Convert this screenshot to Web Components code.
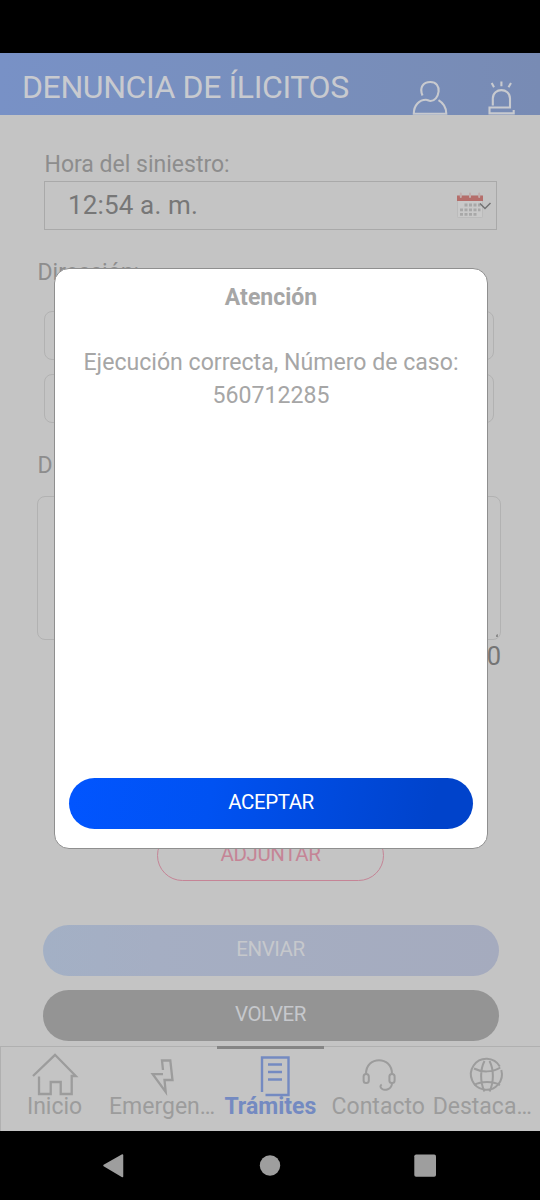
<!DOCTYPE html>
<html lang="es">
<head>
<meta charset="utf-8">
<meta name="viewport" content="width=device-width, initial-scale=1">
<title>Denuncia de ílicitos</title>
<style>
    body {
        margin: 0;
        background: #c4c4c4;
        font-family: Roboto, "Liberation Sans", sans-serif;
        color: #8d8d8d;
    }
</style>
</head>
<body>
<phone-screen>
    <app-header slot="header">DENUNCIA DE ÍLICITOS</app-header>

    <time-field label="Hora del siniestro:" value="12:54 a. m."></time-field>
    <address-fields label="Dirección:"></address-fields>
    <text-area-field label="Descripción:" count="0"></text-area-field>
    <pill-button kind="outline">ADJUNTAR</pill-button>
    <pill-button kind="send">ENVIAR</pill-button>
    <pill-button kind="back">VOLVER</pill-button>

    <tab-bar slot="tabs">
        <tab-item icon="home">Inicio</tab-item>
        <tab-item icon="bolt" long>Emergen…</tab-item>
        <tab-item icon="form" active>Trámites</tab-item>
        <tab-item icon="headset">Contacto</tab-item>
        <tab-item icon="globe" long>Destaca…</tab-item>
    </tab-bar>

    <alert-dialog slot="dialog" heading="Atención">
        Ejecución correcta, Número de caso: 560712285
        <pill-button slot="action" kind="accept">ACEPTAR</pill-button>
    </alert-dialog>
</phone-screen>

<script>
    class PhoneScreen extends HTMLElement {
        constructor() {
            super();
            this.attachShadow({ mode: 'open' }).innerHTML = `
                <style>
                    :host { display: flex; flex-direction: column; position: relative; width: 540px; height: 1200px; overflow: hidden; }
                    .status { height: 53px; background: #000; flex: none; }
                    main { flex: 1; display: flex; flex-direction: column; padding-top: 34px; min-height: 0; box-sizing: border-box; }
                    .nav { height: 69px; flex: none; background: #000; display: flex; }
                    .nav svg { display: block; }
                </style>
                <div class="status"></div>
                <slot name="header"></slot>
                <main><slot></slot></main>
                <slot name="tabs"></slot>
                <div class="nav">
                    <svg width="540" height="69" fill="#9e9e9e">
                        <path d="M104 34.5 L122.5 24 V45.500 Z" stroke="#9e9e9e" stroke-width="1.500" stroke-linejoin="round"/>
                        <circle cx="270" cy="34.500" r="10.200"/>
                        <rect x="414.300" y="23.500" width="21.700" height="22.300" rx="1.800"/>
                    </svg>
                </div>
                <slot name="dialog"></slot>
            `;
        }
    }

    class AppHeader extends HTMLElement {
        constructor() {
            super();
            this.attachShadow({ mode: 'open' }).innerHTML = `
                <style>
                    :host { display: flex; flex: none; height: 62px; box-sizing: border-box; padding: 0 24px 0 22px;
                        background: linear-gradient(90deg, #7891c6, #788fbd 50%, #788bb4); color: #c8cacf; }
                    .title { flex: 1; font-size: 32px; letter-spacing: -.4px; line-height: 68px; white-space: nowrap; }
                    svg { display: block; align-self: flex-end; fill: none; stroke: #c8cacf; stroke-width: 2.1; }
                    .siren { margin-left: 38px; }
                </style>
                <div class="title"><slot></slot></div>
                <svg width="36" height="38" viewBox="0 0 36 38">
                    <path d="M10.500 18.500 C7 10 11.500 5 18.300 5 C24.500 5 27 9.500 26.600 14.500 C26 20 22.500 24 18.500 24 C16.500 24 15.500 22.800 14 22.800 C7.500 22.800 1.800 28 1.800 36.700 H34.300 C34.300 31 32 26.500 26.500 23.200"/>
                </svg>
                <svg class="siren" width="30" height="38" viewBox="0 0 30 38">
                    <path d="M6.800 28.500 V21.500 C6.800 10.300 24 10.300 24 21.500 V30.500 H3.500 V36.400 H27.700 V33 M5.700 6 L8 10.200 M15.400 4.500 V9.300 M25 6 L22.500 10.200"/>
                </svg>
            `;
        }
    }

    class TimeField extends HTMLElement {
        constructor() {
            super();
            this.attachShadow({ mode: 'open' }).innerHTML = `
                <style>
                    :host { display: block; margin: 0 43px 0 44px; }
                    .label { font-size: 23px; line-height: 32px; height: 30px; padding-left: .5px; }
                    .box { display: flex; align-items: center; height: 49px; box-sizing: border-box; margin-top: 2px;
                        padding: 0 4px 0 23px; border: 1px solid #a9a9a9; font-size: 26px; color: #777; }
                    .value { flex: 1; letter-spacing: .15px; padding-bottom: 1px; }
                    svg { display: block; }
                </style>
                <div class="label">${this.getAttribute('label')}</div>
                <div class="box">
                    <span class="value">${this.getAttribute('value')}</span>
                    <svg width="36" height="28" viewBox="0 0 36 28">
                        <rect x="1.500" y="4" width="25" height="21.500" rx="1" fill="#c9c9c9" stroke="#b8b8b8" stroke-width=".8"/>
                        <path d="M1 3.500 H27 V9 H1 Z" fill="#b56e6b"/>
                        <path d="M4.800 1.500 V5 M14 1.500 V5 M23.200 1.500 V5" stroke="#c2aead" stroke-width="2" stroke-linecap="round"/>
                        <path d="M8.500 13 H24.500 M4 17.800 H24.500 M4 22.300 H21" stroke="#a8a8a8" stroke-width="2.8" stroke-dasharray="3 1.500"/>
                        <path d="M24 11.500 L29 16.500 L34.500 11" fill="none" stroke="#737373" stroke-width="1.500"/>
                    </svg>
                </div>
            `;
        }
    }

    class AddressFields extends HTMLElement {
        constructor() {
            super();
            this.attachShadow({ mode: 'open' }).innerHTML = `
                <style>
                    :host { display: block; margin: 28px 46px 0 37px; }
                    .label { font-size: 23px; line-height: 30px; padding-left: .5px; }
                    .inputs { display: grid; gap: 14px; margin: 23px 0 0 7px; }
                    .inputs div { height: 49px; box-sizing: border-box; border: 1px solid #b2b2b2; border-radius: 8px; }
                </style>
                <div class="label">${this.getAttribute('label')}</div>
                <div class="inputs"><div></div><div></div></div>
            `;
        }
    }

    class TextAreaField extends HTMLElement {
        constructor() {
            super();
            this.attachShadow({ mode: 'open' }).innerHTML = `
                <style>
                    :host { display: block; margin: 27px 39px 0 37px; }
                    .label { font-size: 23px; line-height: 32px; height: 30px; padding-left: .5px; letter-spacing: .8px; }
                    .area { display: flex; align-items: flex-end; justify-content: flex-end; height: 144px; box-sizing: border-box;
                        margin-top: 16px; border: 1px solid #b2b2b2; border-radius: 8px; }
                    svg { display: block; }
                    .count { text-align: right; font-size: 25.5px; line-height: 32px; color: #757575; height: 30px; }
                </style>
                <div class="label">${this.getAttribute('label')}</div>
                <div class="area">
                    <!-- resize grip -->
                    <svg width="14" height="64"><path d="M0 0 L2 2 L0 4 Z M10 60 L12 59 V62 H10 Z" fill="#8c8c8c"/></svg>
                </div>
                <div class="count">${this.getAttribute('count')}</div>
            `;
        }
    }

    class PillButton extends HTMLElement {
        constructor() {
            super();
            this.attachShadow({ mode: 'open' }).innerHTML = `
                <style>
                    :host { display: block; flex: none; height: 51px; box-sizing: border-box; border-radius: 26px;
                        font-size: 20.5px; letter-spacing: -.42px; line-height: 48px; text-align: center; color: #c6c8cc; }
                    :host([kind="outline"]) { width: 227px; margin: 160px 0 0 157px; border: 1px solid #c58496; color: #c58496; line-height: 46px; }
                    :host([kind="send"]) { margin: 44px 41.5px 0 42.5px; background: linear-gradient(90deg, #a3b0c5, #a5aec3 25%, #a5abbe); }
                    :host([kind="back"]) { margin: 14px 41.5px 0 42.5px; background: #949494; }
                    :host([kind="accept"]) { color: #fff; background: linear-gradient(100deg, #0155ff, #0052f2 35%, #0043cb 90%); }
                </style>
                <slot></slot>
            `;
        }
    }

    class TabBar extends HTMLElement {
        constructor() {
            super();
            this.attachShadow({ mode: 'open' }).innerHTML = `
                <style>
                    :host { display: flex; flex: none; height: 85px; padding-left: .6px; box-sizing: border-box; box-shadow: inset 1px 1px 0 #b0b0b0; }
                </style>
                <slot></slot>
            `;
        }
    }

    // each drawing fills the 108px column of its tab
    const TAB_ICONS = {
        home: '<path d="M32 28 L54 6.800 L74.800 28 H70.700 V46 H59.700 V34 H49.700 V46 H38 V28.500"/>',
        bolt: '<path d="M55 22 L54 12.500 H62.300 L64.500 32 H56.500 L57.700 44 L44.700 26.200 H55"/>',
        form: '<path d="M46 44 V9.500 H72.500 V47 H49.500 M52 16.500 H66 M52 24 H66 M52 31.500 H66" stroke-width="2.400"/>',
        headset: '<g stroke-width="2"><path d="M42 26 C42 7.500 68 7.500 68 26 M68 35 C68 42 60.200 42.500 58.200 41 C55.700 39.500 56.200 37.500 57.700 36.500"/><rect x="39.600" y="26" width="5.200" height="9" rx="2.500"/><rect x="65.400" y="26" width="5.200" height="9" rx="2.500"/></g>',
        globe: '<g stroke-width="2" transform="translate(1 1.500)"><path d="M68.300 20.500 A15.500 15.500 0 1 1 66.800 17"/><path d="M51.500 11.500 C47 20 47 33 51.500 42 M56.500 11.500 C61 20 61 33 56.500 42 M41 19 C48.500 23 59.500 23 67.300 18 M41 35.500 C48.500 31.500 59.500 31.500 67 35.500"/></g>'
    };

    class TabItem extends HTMLElement {
        constructor() {
            super();
            this.attachShadow({ mode: 'open' }).innerHTML = `
                <style>
                    :host { display: block; flex: none; width: 107.9px; text-align: center; color: #9c9c9c; box-sizing: border-box; }
                    :host([active]) { color: #748ac1; font-weight: bold; background: linear-gradient(#858585, #858585) 1px 0 / 108px 3px no-repeat; }
                    svg { display: block; padding-top: 2px; fill: none; stroke: currentColor; stroke-width: 2.3; }
                    .label { font-size: 23px; line-height: 28px; margin-top: -4px; white-space: nowrap; }
                    /* clipped names run from the left edge of the tab */
                    :host([long]) .label { text-align: left; text-indent: .5px; }
                </style>
                <svg width="108" height="49">${TAB_ICONS[this.getAttribute('icon')]}</svg>
                <div class="label"><slot></slot></div>
            `;
        }
    }

    class AlertDialog extends HTMLElement {
        constructor() {
            super();
            this.attachShadow({ mode: 'open' }).innerHTML = `
                <style>
                    :host { display: flex; flex-direction: column; position: absolute; left: 54px; top: 268px; width: 434px; height: 581px;
                        box-sizing: border-box; padding: 14px 14px 19px; border: 1px solid #8f8f8f; border-radius: 15px;
                        background: #fff; color: #a6a6a6; text-align: center; }
                    .heading { font-size: 23px; font-weight: bold; line-height: 30px; }
                    .message { flex: 1; margin-top: 33px; font-size: 23.1px; line-height: 33px; }
                </style>
                <div class="heading">${this.getAttribute('heading')}</div>
                <div class="message"><slot></slot></div>
                <slot name="action"></slot>
            `;
        }
    }

    customElements.define('phone-screen', PhoneScreen);
    customElements.define('app-header', AppHeader);
    customElements.define('time-field', TimeField);
    customElements.define('address-fields', AddressFields);
    customElements.define('text-area-field', TextAreaField);
    customElements.define('pill-button', PillButton);
    customElements.define('tab-bar', TabBar);
    customElements.define('tab-item', TabItem);
    customElements.define('alert-dialog', AlertDialog);
</script>
</body>
</html>
